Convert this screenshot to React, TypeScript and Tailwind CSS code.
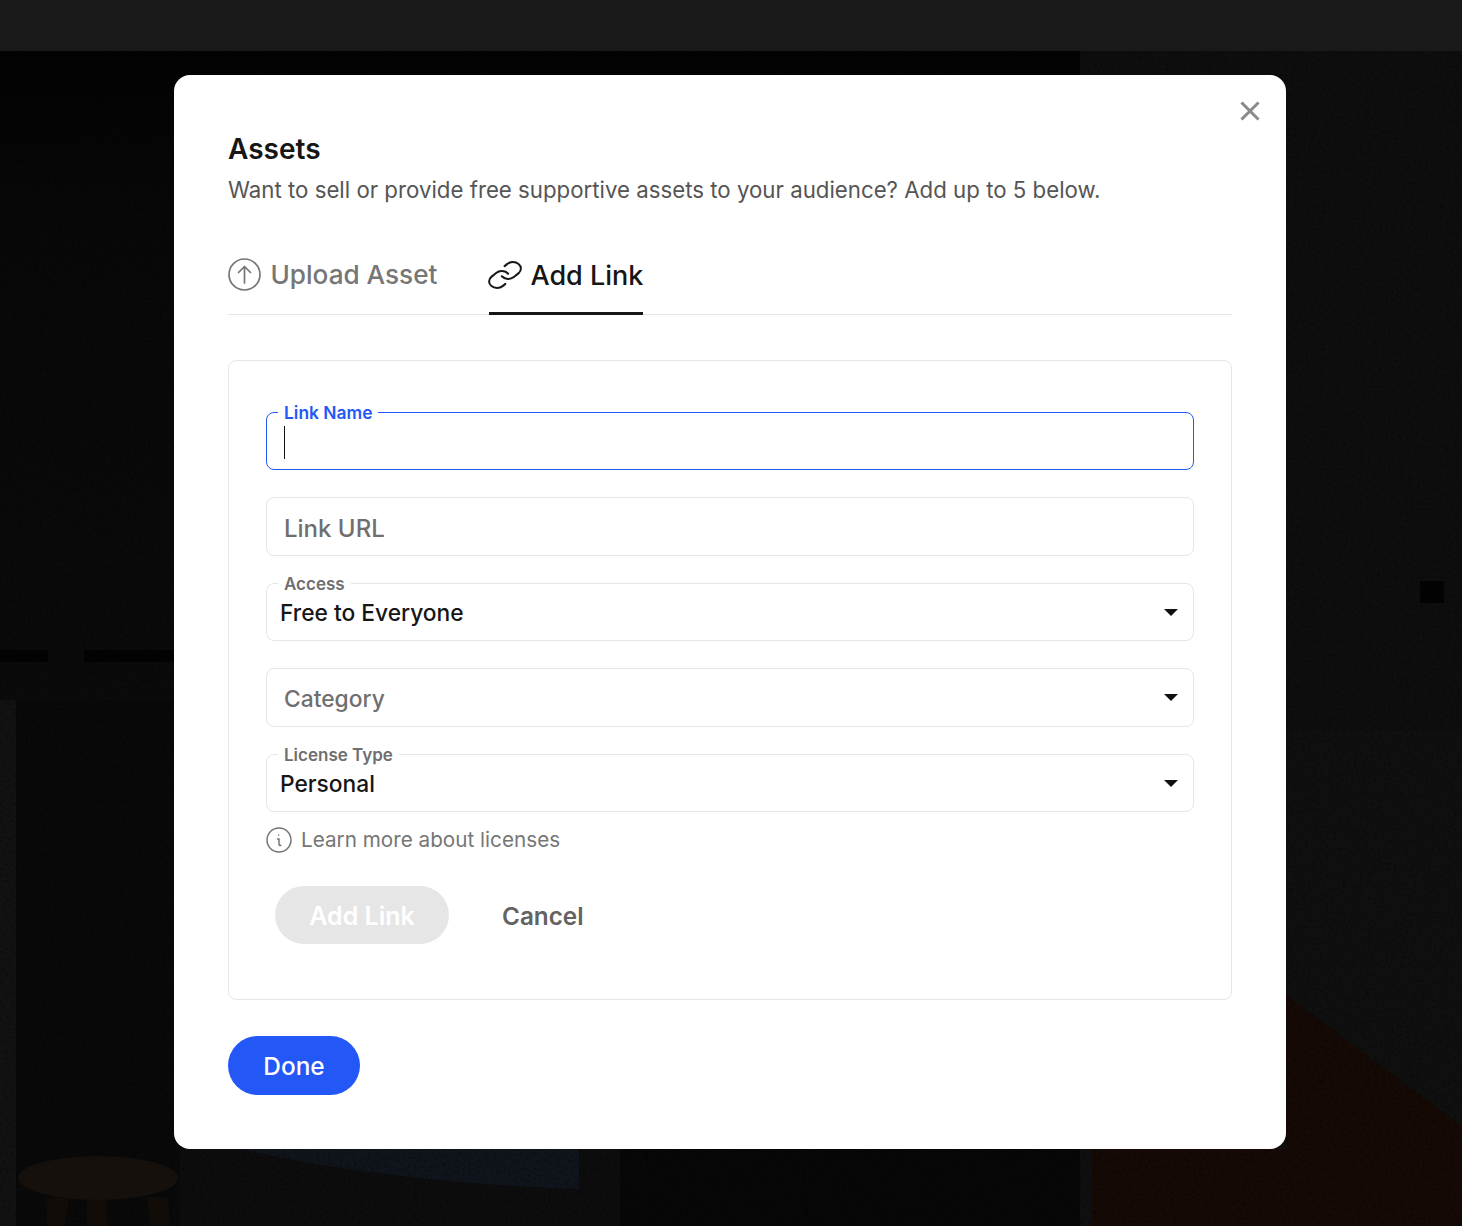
import React from "react";

function Caret() {
  return (
    <svg width="14" height="7" viewBox="0 0 14 7" className="absolute right-[15px] top-[25px]">
      <path d="M0 0H14L7 7Z" fill="#111111" />
    </svg>
  );
}

function FloatLabel({ children, blue }: { children: React.ReactNode; blue?: boolean }) {
  return (
    <span
      className={`absolute left-[11px] top-[-10px] bg-white px-[6px] leading-[20px] font-semibold whitespace-nowrap ${
        blue ? "text-[17.4px] text-[#2458f6]" : "text-[17px] text-[#6f6f6f]"
      }`}
    >
      {children}
    </span>
  );
}

function SelectField({ label, value }: { label: string; value: string }) {
  return (
    <div className="relative flex h-[58px] items-center rounded-[8px] border border-[#e6e6e6] pl-[13px]">
      <FloatLabel>{label}</FloatLabel>
      <span className="pt-[2px] text-[22.75px] font-medium text-[#161616]">{value}</span>
      <Caret />
    </div>
  );
}

export default function App() {
  return (
    <div className="relative h-[1226px] w-[1462px] overflow-hidden bg-[#0a0a0a] font-['Inter',sans-serif]">
      <svg className="absolute inset-0" width="1462" height="1226" viewBox="0 0 1462 1226">
        <defs>
          <linearGradient id="wall" x1="0" y1="0" x2="0" y2="1">
            <stop offset="0" stopColor="#030303" />
            <stop offset="0.25" stopColor="#080808" />
            <stop offset="1" stopColor="#0b0b0b" />
          </linearGradient>
          <filter id="grain" x="0" y="0" width="100%" height="100%">
            <feTurbulence type="fractalNoise" baseFrequency="0.35" numOctaves="3" seed="4" />
            <feColorMatrix values="0 0 0 0 0  0 0 0 0 0  0 0 0 0 0  0 0 0 1.6 -0.75" />
          </filter>
        </defs>
        <rect x="0" y="51" width="1462" height="680" fill="url(#wall)" />
        <rect x="1080" y="51" width="382" height="680" fill="#0e0e0e" />
        <rect x="1080" y="731" width="382" height="495" fill="#101010" />
        <rect x="0" y="650" width="48" height="12" fill="#030303" />
        <rect x="84" y="650" width="90" height="12" fill="#030303" />
        <rect x="0" y="700" width="16" height="526" fill="#121212" />
        <rect x="16" y="700" width="158" height="526" fill="#090909" />
        <rect x="180" y="1149" width="440" height="77" fill="#0d0d0d" />
        <rect x="620" y="1149" width="460" height="77" fill="#070707" />
        <rect x="1080" y="1149" width="12" height="77" fill="#101010" />
        <path d="M241 1149 L579 1149 L579 1189 C470 1186 340 1172 241 1149Z" fill="#10141c" />
        <path d="M1092 1226 V1149 H1286 V995 L1462 1126 V1226Z" fill="#150a05" />
        <rect x="1420" y="581" width="24" height="22" fill="#030303" />
        <rect x="0" y="51" width="1462" height="1175" filter="url(#grain)" opacity="0.5" />
        <ellipse cx="98" cy="1178" rx="80" ry="22" fill="#15100b" />
        <path d="M47 1198 H70 L64 1226 H47Z" fill="#110c07" />
        <path d="M87 1200 H107 V1226 H87Z" fill="#110c07" />
        <path d="M147 1197 H168 L170 1226 H150Z" fill="#110c07" />
      </svg>

      <div className="relative h-[51px] bg-[#191919]" />

      <div className="relative mt-[24px] ml-[174px] h-[1074px] w-[1112px] rounded-[16px] bg-white px-[54px] pt-[57px]">
        <svg width="20" height="20" viewBox="0 0 20 20" className="absolute right-[26px] top-[26px]">
          <path d="M2.5 2.5L17.5 17.5M17.5 2.5L2.5 17.5" stroke="#8a8a8a" strokeWidth="3" strokeLinecap="square" />
        </svg>

        <h1 className="text-[28px] leading-[34px] font-semibold text-[#161616]">Assets</h1>
        <p className="mt-[9px] text-[22.25px] leading-[30px] text-[#555555]">
          Want to sell or provide free supportive assets to your audience? Add up to 5 below.
        </p>

        <div className="mt-[35px] flex h-[75px] gap-[52px] border-b border-[#e6e6e6]">
          <div className="flex h-[74px] items-start gap-[9.5px] pt-[18px]">
            <svg width="33" height="33" viewBox="0 0 33 33" fill="none" stroke="#767676" strokeWidth="1.7">
              <circle cx="16.5" cy="16.5" r="15.5" />
              <path d="M16.5 25V9M10.5 14.5L16.5 8.5L22.5 14.5" strokeLinecap="round" strokeLinejoin="round" />
            </svg>
            <span className="text-[26.15px] leading-[34px] font-medium text-[#767676]">Upload Asset</span>
          </div>
          <div className="flex h-[75px] items-start gap-[9px] border-b-[3px] border-[#161616] pt-[18px]">
            <svg
              width="32"
              height="26"
              viewBox="2 2 20 20"
              preserveAspectRatio="none"
              fill="none"
              stroke="#161616"
              strokeLinecap="round"
              strokeLinejoin="round"
              className="mt-[4px] overflow-visible"
            >
              <path vectorEffect="non-scaling-stroke" strokeWidth="2" d="M10 13a5 5 0 0 0 7.54.54l3-3a5 5 0 0 0-7.07-7.07l-1.72 1.71" />
              <path vectorEffect="non-scaling-stroke" strokeWidth="2" d="M14 11a5 5 0 0 0-7.54-.54l-3 3a5 5 0 0 0 7.07 7.07l1.71-1.71" />
            </svg>
            <span className="pt-px text-[27px] leading-[34px] font-medium text-[#161616]">Add Link</span>
          </div>
        </div>

        <div className="mt-[45px] h-[640px] rounded-[8px] border border-[#e6e6e6] px-[37px] pt-[51px]">
          <div className="relative h-[58px] rounded-[8px] border border-[#2458f6]">
            <FloatLabel blue>Link Name</FloatLabel>
            <div className="absolute left-[17px] top-[13px] h-[33px] w-px bg-[#111111]" />
          </div>
          <div className="relative mt-[27px] flex h-[59px] items-center rounded-[8px] border border-[#e6e6e6] pl-[17px]">
            <span className="pt-[4px] text-[24px] font-medium text-[#6f6f6f]">Link URL</span>
          </div>
          <div className="mt-[27px]">
            <SelectField label="Access" value="Free to Everyone" />
          </div>
          <div className="relative mt-[27px] flex h-[59px] items-center rounded-[8px] border border-[#e6e6e6] pl-[17px]">
            <span className="pt-[4px] text-[22.8px] font-medium text-[#6f6f6f]">Category</span>
            <Caret />
          </div>
          <div className="mt-[27px]">
            <SelectField label="License Type" value="Personal" />
          </div>
          <div className="mt-[14px] flex h-[28px] items-center gap-[9px]">
            <svg width="26" height="26" viewBox="0 0 26 26" fill="none" stroke="#767676" strokeWidth="1.5">
              <circle cx="13" cy="13" r="12" />
              <path d="M11.5 12H13V17.5C13 18.5 13.7 18.7 14.8 18.3" strokeLinecap="round" />
              <circle cx="12.6" cy="8" r="0.8" fill="#767676" stroke="none" />
            </svg>
            <span className="text-[20.7px] text-[#767676]">Learn more about licenses</span>
          </div>
          <div className="mt-[32px] flex items-center pl-[9px]">
            <div className="flex h-[58px] w-[174px] items-center justify-center rounded-full bg-[#e6e6e6] pt-[4px] text-[25px] font-semibold text-white">
              Add Link
            </div>
            <span className="ml-[53px] pt-[2px] text-[24.3px] font-semibold text-[#636363]">Cancel</span>
          </div>
        </div>

        <div className="mt-[36px] flex h-[59px] w-[132px] items-center justify-center rounded-full bg-[#2458f6] pt-[2px] text-[24.4px] font-medium text-white">
          Done
        </div>
      </div>
    </div>
  );
}
